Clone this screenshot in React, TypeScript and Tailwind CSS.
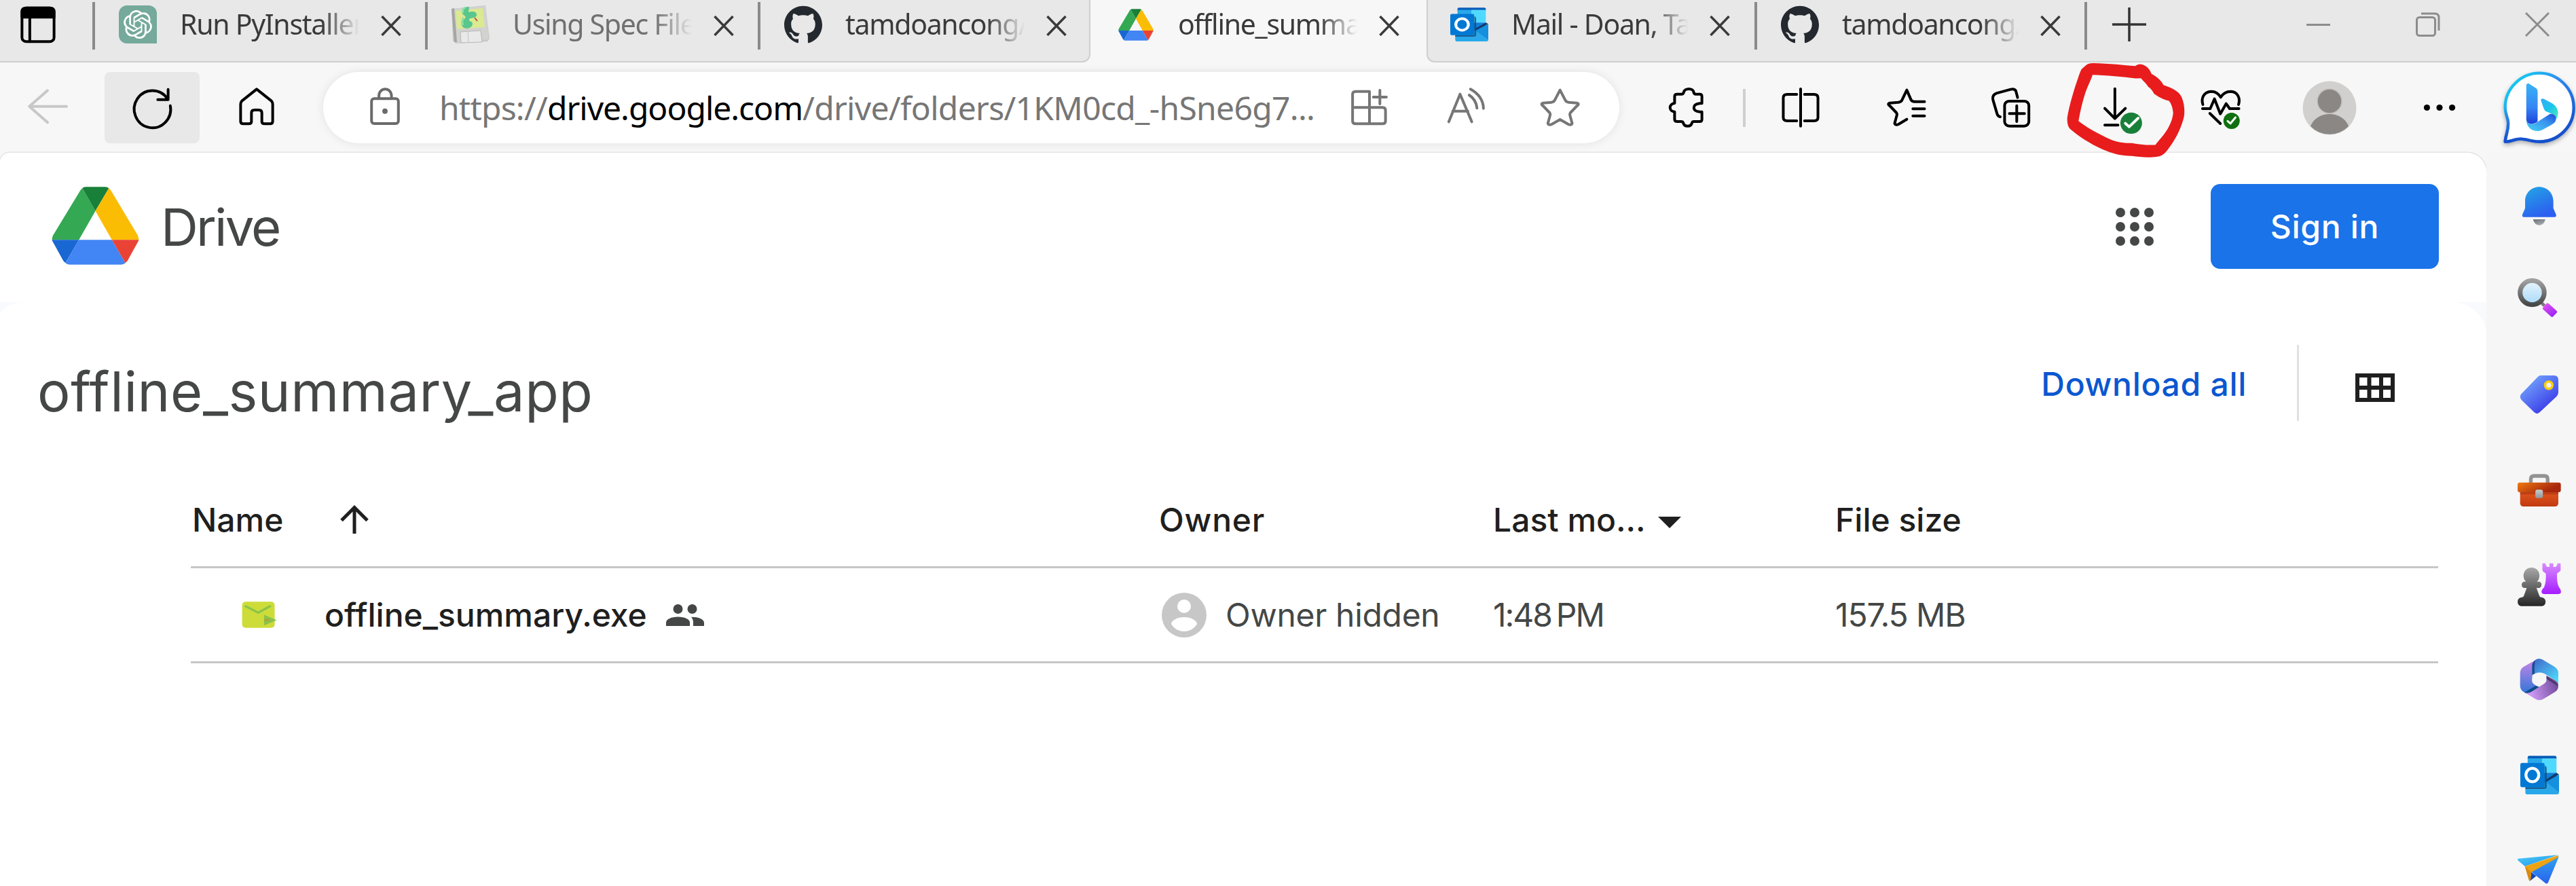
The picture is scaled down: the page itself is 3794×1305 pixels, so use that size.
import type { ReactNode } from "react";
import { SiGithub, SiOpenai } from "react-icons/si";

function Glyph({ vb, className = "", children }: { vb: string; className?: string; children: ReactNode }) {
  return (
    <svg
      viewBox={vb}
      preserveAspectRatio="none"
      fill="none"
      stroke="currentColor"
      strokeLinecap="round"
      strokeLinejoin="round"
      className={"h-[57px] w-[60px] shrink-0 overflow-visible [&_*]:[vector-effect:non-scaling-stroke] " + className}
      strokeWidth={4}
    >
      {children}
    </svg>
  );
}

function DriveLogo({ className }: { className: string }) {
  return (
    <svg viewBox="119 165 202 344" preserveAspectRatio="none" className={className}>
      <path fill="#34a853" d="M190 172Q187 176 185 182L122 380Q120 390 120 399H182L220 272Z" />
      <path fill="#188038" d="M190 172Q192 166 198 166H242Q248 166 251 172L220 272Z" />
      <path fill="#fbbc04" d="M251 172Q254 176 256 182L318 380Q320 390 320 399H258L220 272Z" />
      <path fill="#1967d2" d="M120 399H182L151 501Q147 496 145 488L123 412Q120 405 120 399Z" />
      <path fill="#4285f4" d="M182 399H258L289 501Q286 508 280 508H160Q154 508 151 501Z" />
      <path fill="#ea4335" d="M258 399H320Q320 405 317 412L295 488Q293 496 289 501Z" />
    </svg>
  );
}

function OutlookLogo({ className }: { className: string }) {
  return (
    <svg viewBox="333 638 169 169" preserveAspectRatio="none" className={className}>
      <path fill="#0a5cb8" d="M372 639H484Q491 639 491 646V652H365V646Q365 639 372 639Z" />
      <path fill="#28a8ea" d="M365 650H428V713H365Z" />
      <path fill="#50d9ff" d="M428 650H491V713H428Z" />
      <path fill="#0f7fd8" d="M365 713H491V760H365Z" />
      <path fill="#123b6d" d="M491 713L502 720L446 752V742Z" />
      <path fill="#28a8ea" d="M355 770L446 752L502 800Q501 807 494 807H362Q355 807 355 800Z" />
      <path fill="#1490df" d="M502 721V800L446 754Z" />
      <path fill="#14456f" opacity=".75" d="M355 776H440V682Q448 684 448 692V774Q448 783 439 783H355Z" />
      <rect x="333" y="670" width="106" height="106" rx="8" fill="#0078d4" />
      <ellipse cx="385.500" cy="722.500" rx="28" ry="29" fill="none" stroke="#fff" strokeWidth="12.500" />
    </svg>
  );
}

function CloseX({ className }: { className: string }) {
  return (
    <svg viewBox="0 0 30 30" className={"shrink-0 " + className} fill="none" stroke="currentColor" strokeWidth="3.500">
      <path d="M1.500 1L28.500 29M28.500 1L1.500 29" />
    </svg>
  );
}

function Floppy() {
  return (
    <svg viewBox="0 0 56 56" className="h-14 w-14">
      <path d="M0 5L50 0L56 49L53 53L6 56L2 52Z" fill="#c9c9c9" />
      <path d="M1 5L50 1L55 50L5 55Z" fill="#d2d2d0" />
      <path d="M0 5L4 4L8 54L4 54Z" fill="#a5a5a3" />
      <path d="M6 8L46 4L49 32L8 35Z" fill="#dbe991" />
      <path d="M13 39L43 37L45 54L14 55Z" fill="#e9e9e9" stroke="#b8b8b8" />
      <path d="M24 38L25 54" stroke="#c3c3c3" />
      <path d="M26 2C14 2 13 11 19 15C25 19 12 22 15 29C18 37 31 34 31 27C31 23 26 24 26 21C27 17 34 20 37 15C38 9 31 8 25 10" fill="#58c68d" />
      <path d="M20 3Q15 6 17 11M18 18Q14 23 17 29" stroke="#8fe0a6" strokeWidth="3" fill="none" />
      <path d="M34 18L38 23" stroke="#b3503a" strokeWidth="2" />
    </svg>
  );
}

function Tab({ icon, title, className, muted, bar = true, gap = "w-[267px]" }: { icon: ReactNode; title: string; className: string; muted?: boolean; bar?: boolean; gap?: string }) {
  return (
    <div className={"flex h-[72px] shrink-0 items-center " + className}>
      <div className={"mt-[3px] h-[70px] w-1 " + (bar ? "bg-[#8a8a8a]" : "")} />
      <div className="ml-[35px] flex h-14 w-14 shrink-0 items-center justify-center">{icon}</div>
      <div
        className={
          "mb-[3px] ml-[34px] shrink-0 overflow-hidden text-[41px] leading-[60px] tracking-[-1.3px] whitespace-nowrap [mask-image:linear-gradient(to_right,black_78%,transparent_99%)] " +
          gap + (muted ? " text-[#707070]" : " text-[#3a3a3a]")
        }
      >
        {title}
      </div>
      <CloseX className="mt-[3px] ml-[29px] h-[30px] w-[30px] text-[#3a3a3a]" />
    </div>
  );
}

function TabStrip() {
  return (
    <div className="flex h-[92px] bg-[#f7f7f7] font-['Noto_Sans',sans-serif]">
      <div className="flex w-[1606px] shrink-0 rounded-br-[12px] border-r-2 border-b-2 border-[#cfcfcf] bg-[#e8e8e8]">
        <div className="flex h-[72px] w-[136px] shrink-0 items-center pl-[26px]">
          <Glyph vb="41 24 94 168" className="h-[56px] text-black">
            <rect x="51" y="35" width="74" height="146" rx="10" ry="17" />
            <path d="M51 75V50Q51 35 61 35H115Q125 35 125 50V75Z" fill="currentColor" />
            <path d="M69 75V181" />
          </Glyph>
        </div>
        <Tab
          className="w-[490px]"
          title="Run PyInstaller"
          icon={
            <div className="flex h-14 w-14 items-center justify-center rounded-l-[12px] rounded-tr-[12px] bg-[#74a99b]">
              <SiOpenai className="h-[42px] w-[42px] text-white" />
            </div>
          }
        />
        <Tab className="w-[490px]" title="Using Spec Files" muted icon={<Floppy />} />
        <Tab className="w-[488px]" title="tamdoancong/" icon={<SiGithub className="h-14 w-14 text-[#24292f]" />} />
      </div>
      <Tab className="w-[495px]" title="offline_summary" bar={false} icon={<DriveLogo className="h-[47px] w-[52px]" />} />
      <div className="flex min-w-0 flex-1 rounded-bl-[12px] border-b-2 border-l-2 border-[#cfcfcf] bg-[#e8e8e8]">
        <Tab className="-ml-[6px] w-[487px]" title="Mail - Doan, Tam" bar={false} gap="w-[263px]" icon={<OutlookLogo className="h-[50px] w-14" />} />
        <Tab className="w-[486px]" title="tamdoancong/" gap="w-[263px]" icon={<SiGithub className="h-14 w-14 text-[#24292f]" />} />
        <div className="flex h-[72px] items-center">
          <div className="mt-[3px] h-[70px] w-1 bg-[#8a8a8a]" />
          <svg viewBox="0 0 50 50" className="ml-[37px] h-[50px] w-[50px] text-[#333]" stroke="currentColor" strokeWidth="3.500">
            <path d="M25 0V50M0 25H50" />
          </svg>
          <svg viewBox="0 0 35 35" className="ml-[236px] h-[35px] w-[35px]" stroke="#8c8c8c" strokeWidth="3">
            <path d="M0 17.500H35" />
          </svg>
          <svg viewBox="0 0 36 36" className="ml-[126px] h-[36px] w-[36px]" fill="none" stroke="#8c8c8c" strokeWidth="3">
            <rect x="1.500" y="7.500" width="27" height="27" rx="4" />
            <path d="M8 2H28Q34 2 34 8V27" />
          </svg>
          <svg viewBox="0 0 36 36" className="ml-[125px] h-[36px] w-[36px]" fill="none" stroke="#8c8c8c" strokeWidth="3">
            <path d="M1 1L35 35M35 1L1 35" />
          </svg>
        </div>
      </div>
    </div>
  );
}

function BingLogo() {
  return (
    <svg viewBox="260 76 317 320" preserveAspectRatio="none" className="ml-[64px] h-[107px] w-[106px] shrink-0 overflow-visible drop-shadow-[0_3px_3px_rgba(0,0,0,0.3)]">
      <defs>
        <linearGradient id="bo" x1="0" y1="0" x2=".9" y2=".9">
          <stop offset="0" stopColor="#12cdf0" />
          <stop offset=".2" stopColor="#18c0f0" />
          <stop offset=".5" stopColor="#3088f0" />
          <stop offset="1" stopColor="#1450cc" />
        </linearGradient>
        <linearGradient id="bo2" x1="0" y1="0" x2="0" y2="1">
          <stop offset="0.500" stopColor="#1a50d0" stopOpacity="0" />
          <stop offset="1" stopColor="#1550cc" />
        </linearGradient>
        <linearGradient id="b1" x1="0" y1="0" x2="0" y2="1">
          <stop offset="0" stopColor="#37b4f6" />
          <stop offset=".6" stopColor="#3584f5" />
          <stop offset="1" stopColor="#1c40d8" />
        </linearGradient>
        <linearGradient id="b2" x1="0" y1="1" x2="1" y2="0">
          <stop offset="0" stopColor="#46d2f4" />
          <stop offset=".6" stopColor="#3993ee" />
          <stop offset="1" stopColor="#1a49dc" />
        </linearGradient>
        <linearGradient id="b3" x1="0" y1="0" x2="1" y2="1">
          <stop offset="0" stopColor="#35a9fa" />
          <stop offset=".5" stopColor="#1ac7ea" />
          <stop offset="1" stopColor="#5be8b8" />
        </linearGradient>
      </defs>
      <path d="M418 84C496 84 570 148 570 236C570 322 500 386 418 386C385 386 362 374 335 374C308 374 290 388 268 386C270 352 287 330 280 292C274 270 268 256 268 234C268 150 340 84 418 84Z" fill="#fff" stroke="url(#bo)" strokeWidth="13" strokeLinejoin="round" />
      <path d="M418 84C496 84 570 148 570 236C570 322 500 386 418 386C385 386 362 374 335 374C308 374 290 388 268 386C270 352 287 330 280 292C274 270 268 256 268 234C268 150 340 84 418 84Z" fill="none" stroke="url(#bo2)" strokeWidth="13" strokeLinejoin="round" />
      <path d="M425 202Q427 194 437 197L470 214C494 228 504 246 500 270Q498 282 492 290C492 276 484 268 472 263L446 252Q441 248 438 240Z" fill="url(#b3)" />
      <path d="M361 290C362 305 382 314 402 304L466 264C484 262 496 276 491 292C488 302 480 307 470 313L432 334C404 348 362 334 361 290Z" fill="url(#b2)" />
      <path d="M361 138Q362 128 372 130L402 149Q411 154 411 166V296C400 312 361 314 361 286Z" fill="url(#b1)" />
    </svg>
  );
}

function Toolbar() {
  return (
    <div className="flex h-[133px] items-center bg-[#f7f7f7]">
      <Glyph vb="62 390 94 171" className="ml-10 text-[#c8c8c8]">
        <path d="M153 470H68M109 400L67 470L109 541" />
      </Glyph>
      <div className="ml-[54px] flex h-[105px] w-[140px] shrink-0 items-center justify-center rounded-lg bg-[#e8e8e8]">
        <Glyph vb="304 390 94 171">
          <path d="M393 467A42 82 0 1 1 387 438M388 395V440H364" />
        </Glyph>
      </div>
      <Glyph vb="546 390 94 171" className="ml-[54px]">
        <path d="M593 394L559 446Q556 452 556 460V536Q556 547 562 547H575Q581 547 581 538V499Q581 486 588 486H598Q605 486 605 499V538Q605 547 611 547H624Q630 547 630 536V460Q630 452 627 446Z" />
      </Glyph>
      <div className="ml-[68px] flex h-[105px] w-[1909px] shrink-0 items-center rounded-full bg-white shadow-[0_0_14px_rgba(0,0,0,0.09)]">
        <Glyph vb="842 390 94 171" className="ml-[61px] text-[#6b6b6b]">
          <rect x="858" y="436" width="62" height="110" rx="6" ry="12" />
          <path d="M875 434V424C875 384 904 384 904 424V434" />
          <ellipse cx="889" cy="491" rx="3" ry="6" fill="currentColor" />
        </Glyph>
        <div className="ml-[50px] font-['Noto_Sans',sans-serif] text-[48px] leading-[60px] whitespace-nowrap text-[#767676]">
          <span className="tracking-[-0.8px]">https://</span>
          <span className="tracking-[-1.03px] text-black">drive.google.com</span>
          <span className="tracking-[-0.7px]">/drive/folders/1KM0cd_-hSne6g7...</span>
        </div>
        <Glyph vb="-20 390 94 171" className="mr-[83px] ml-auto text-[#767676]">
          <path d="M27 404H-5Q-12 404 -12 416V535Q-12 547 -5 547H57Q64 547 64 535V487Q64 475 57 475H-12M27 404V547M51 399V459M36 429H66" />
        </Glyph>
        <Glyph vb="203 390 94 171" className="mr-[77px] text-[#767676]">
          <path d="M209 538L235 416L262 538M218 491H253M256 420Q272 440 274 478M259 394Q288 425 289 479" />
        </Glyph>
        <Glyph vb="418 390 94 171" className="mr-[58px] text-[#767676]">
          <path d="M466 398L454 442Q452 450 446 452L427 455Q420 460 427 468L442 498Q444 503 443 510L438 545Q440 555 447 549L466 528L485 549Q492 555 494 545L489 510Q488 503 490 498L505 468Q512 460 505 455L486 452Q480 450 478 442Z" />
        </Glyph>
      </div>
      <Glyph vb="711 390 94 171" className="ml-[68px]">
        <path d="M738 416H748Q752 416 753 408C755 388 775 388 776 408Q777 416 781 416H790Q795 416 795 426V457H790C772 462 772 490 790 494H795V528Q795 537 790 537H776Q773 537 772 543C770 562 754 562 752 543Q751 537 747 537H738Q732 537 732 528V494C718 492 718 460 732 456V426Q732 416 738 416Z" />
      </Glyph>
      <div className="ml-[54px] h-14 w-1 shrink-0 bg-[#cfcfcf]" />
      <Glyph vb="976 390 94 171" className="ml-[51px]">
        <path d="M1014 417H992Q983 417 983 432V520Q983 534 992 534H1014M1032 417H1054Q1063 417 1063 432V520Q1063 534 1054 534H1032M1023 393V557" />
      </Glyph>
      <Glyph vb="1221 390 94 171" className="ml-[97px]">
        <path d="M1308 449H1285Q1279 449 1277 442L1267 398L1256 442Q1254 450 1248 452L1228 455Q1221 460 1228 468L1243 498Q1245 503 1244 510L1239 545Q1241 555 1248 549L1267 527M1281 481H1308M1281 512H1308" />
      </Glyph>
      <Glyph vb="1462 390 94 171" className="ml-[93px]">
        <path d="M1484 516Q1479 515 1477 505L1467 440Q1465 420 1475 412L1508 395Q1517 391 1520 402L1524 431M1522 467V537M1505 502H1540" />
        <rect x="1494" y="447" width="56" height="110" rx="11" ry="19" />
      </Glyph>
      <Glyph vb="343 390 105 171" className="ml-[104px]">
        <path d="M376 392V522M350 479L376 524L403 479M350 553H384" />
        <ellipse cx="418" cy="544" rx="28" ry="47" fill="#19803a" stroke="none" />
        <path d="M403 545L413 560L436 522" stroke="#fff" />
      </Glyph>
      <Glyph vb="597 390 105 171" className="ml-[85px]">
        <path d="M603 462C598 435 605 405 625 404C638 404 645 418 649 430C653 418 662 404 675 404C693 405 700 435 695 462M602 480H622L633 437L648 503L663 458L672 480H696M621 501L648 546" />
        <ellipse cx="677" cy="534" rx="21" ry="36" fill="#107010" stroke="none" />
        <path d="M667 535L674 546L687 519" stroke="#fff" strokeWidth="3" />
      </Glyph>
      <svg viewBox="0 0 80 80" className="ml-[90px] h-20 w-20 shrink-0">
        <circle cx="40" cy="40" r="39.500" fill="#d2d0ce" />
        <circle cx="40" cy="30" r="18" fill="#8a8784" stroke="#c2c0bd" strokeWidth="1.500" />
        <path d="M12 67C16 56 27 49 40 49C53 49 64 56 68 67A39 39 0 0 1 12 67Z" fill="#8a8784" />
      </svg>
      <Glyph vb="1161 390 105 171" className="ml-[92px]">
        <g fill="#000" stroke="none">
          <ellipse cx="1181" cy="475.500" rx="8" ry="13.500" />
          <ellipse cx="1213.500" cy="475.500" rx="8" ry="13.500" />
          <ellipse cx="1246" cy="475.500" rx="8" ry="13.500" />
        </g>
      </Glyph>
      <BingLogo />
    </div>
  );
}

function SideIcon({ vb, className, children }: { vb: string; className: string; children: ReactNode }) {
  return (
    <svg viewBox={vb} preserveAspectRatio="none" className={"w-16 shrink-0 overflow-visible " + className}>
      {children}
    </svg>
  );
}

function Grad({ id, a, b, x2 = 0, y2 = 1 }: { id: string; a: string; b: string; x2?: number; y2?: number }) {
  return (
    <linearGradient id={id} x1="0" y1="0" x2={x2} y2={y2}>
      <stop offset="0" stopColor={a} />
      <stop offset="1" stopColor={b} />
    </linearGradient>
  );
}

function Sidebar() {
  return (
    <div className="flex w-[132px] shrink-0 flex-col bg-[#f6f6f6] pt-[50px] pl-[46px]">
      <SideIcon vb="322 585 191 171" className="h-[57px]">
        <defs>
          <Grad id="bell" a="#22a8e4" b="#2c5ff0" x2={0.5} />
          <Grad id="clap" a="#6a7076" b="#a5abb0" x2={0.6} />
        </defs>
        <path d="M417 586C452 586 479 614 479 648V680L491 708Q493 718 486 719H348Q341 718 343 708L355 680V648C355 614 382 586 417 586Z" fill="url(#bell)" />
        <path d="M390 729H444C440 746 430 755 417 755C404 755 394 746 390 729Z" fill="url(#clap)" />
      </SideIcon>
      <SideIcon vb="322 990 191 171" className="mt-[78px] h-[57px]">
        <defs>
          <Grad id="lens" a="#e9f5fb" b="#a8d9fa" />
          <Grad id="ring" a="#a0a0a0" b="#484848" />
          <Grad id="hand" a="#ee52f5" b="#9a27f2" x2={0.6} />
        </defs>
        <path d="M425 1096L440 1111" stroke="#777" strokeWidth="14" />
        <circle cx="386" cy="1053" r="53" fill="url(#lens)" stroke="url(#ring)" strokeWidth="21" />
        <path d="M432 1121L450 1100Q454 1098 459 1102L494 1134Q497 1138 494 1142L478 1159Q473 1163 469 1159L434 1127Q431 1124 432 1121Z" fill="url(#hand)" />
      </SideIcon>
      <SideIcon vb="322 158 191 171" className="mt-[86px] h-[57px]">
        <defs>
          <Grad id="tag" a="#7db8ff" b="#342fe6" x2={0.8} />
        </defs>
        <path d="M423 158H482Q501 159 501 178V232Q501 243 493 251L419 321Q407 332 395 321L338 265Q328 252 338 240L411 164Q416 158 423 158Z" fill="url(#tag)" />
        <circle cx="459" cy="201" r="16" fill="#f4f1fb" stroke="#f8cf0a" strokeWidth="11" />
      </SideIcon>
      <SideIcon vb="322 593 191 147" className="mt-[88px] h-[49px]">
        <defs>
          <Grad id="lid" a="#f07a12" b="#a8280c" x2={0.9} y2={0.4} />
          <Grad id="case" a="#e65a22" b="#c23a10" />
          <Grad id="lock" a="#c8ccd0" b="#8f959b" />
        </defs>
        <path d="M380 636V615Q381 602 394 602H440Q454 602 454 615V636" fill="none" stroke="#939393" strokeWidth="16" />
        <path d="M333 660H501V722Q500 737 486 737H348Q334 737 333 722Z" fill="url(#case)" />
        <path d="M333 672H501V684H333Z" fill="#9d2b0c" opacity=".5" />
        <rect x="322" y="631" width="190" height="43" rx="9" fill="url(#lid)" />
        <rect x="400" y="663" width="33" height="37" rx="9" fill="url(#lock)" />
      </SideIcon>
      <SideIcon vb="322 987 191 192" className="mt-[82px] h-[64px]">
        <defs>
          <Grad id="pawn" a="#a8a8a8" b="#252525" />
          <Grad id="rook" a="#d88cff" b="#a51cff" />
        </defs>
        <path d="M431 989H444Q447 1003 454 1005H462V989H479V1005H487Q495 1003 497 989H511V1019Q511 1023 506 1026L495 1034Q494 1075 503 1093Q513 1105 513 1116Q511 1125 500 1125H440Q427 1125 427 1114Q428 1104 438 1096C447 1075 447 1050 446 1034L434 1025Q431 1022 431 1018Z" fill="url(#rook)" />
        <path d="M383 1008C405 1008 418 1025 418 1043Q418 1060 407 1070H416Q427 1072 427 1083Q427 1097 416 1098H405L418 1134Q421 1140 430 1140Q444 1142 445 1159Q444 1177 430 1178H337Q323 1177 322 1159Q323 1142 337 1140Q346 1140 349 1134L362 1098H351Q340 1096 340 1083Q341 1072 350 1070H359Q348 1060 348 1043C348 1025 362 1008 383 1008Z" fill="url(#pawn)" />
      </SideIcon>
      <SideIcon vb="322 210 191 186" className="mt-[77px] h-[62px]">
        <defs>
          <Grad id="m1" a="#c285e6" b="#3276d8" />
          <Grad id="m2" a="#3e63c8" b="#4fe0ff" x2={0.9} />
          <Grad id="m3" a="#cf9af4" b="#6b4798" x2={0.9} y2={-0.2} />
        </defs>
        <path d="M392 221L349 246Q333 256 333 274V330Q333 348 349 358C362 366 375 361 386 354L412 336L392 322Q385 316 385 306Z" fill="url(#m1)" />
        <path d="M352 360L402 330L419 336L378 362Q365 368 352 360Z" fill="#0d4d86" />
        <path d="M354 360Q368 366 384 356L440 320Q449 314 449 303V286L490 314Q505 328 499 342Q496 352 486 358L437 388Q418 400 398 388Z" fill="url(#m3)" />
        <path d="M449 286L492 308Q503 318 500 332L449 300Z" fill="#3f2a60" opacity=".7" />
        <path d="M386 283V240C388 225 400 214 412 211Q420 209 430 214L484 246Q501 257 501 274V322Q498 312 486 305L440 277Q415 264 386 283Z" fill="url(#m2)" />
        <path d="M386 283V240Q388 226 399 217Q394 245 397 277Z" fill="#123f80" opacity=".8" />
      </SideIcon>
      <OutlookLogo className="mt-[81px] ml-[3.500px] h-[57px] w-[57px] shrink-0" />
      <SideIcon vb="322 1078 191 129" className="mt-[89px] h-[43px]">
        <defs>
          <Grad id="p1" a="#4ccdf8" b="#1e8fe8" x2={1} />
          <Grad id="p2" a="#2da4f2" b="#2b62ec" />
        </defs>
        <path d="M499 1079L325 1095Q318 1099 325 1104L354 1129Z" fill="url(#p1)" />
        <path d="M382 1155L404 1172L376 1194Z" fill="#1247b8" />
        <path d="M500 1082Q503 1084 501 1092L456 1201Q450 1210 442 1202L382 1153Z" fill="url(#p2)" />
        <path d="M499 1081L354 1129L372 1190Q376 1197 379 1189L382 1155L498 1091Q504 1084 499 1081Z" fill="#eda313" />
        <path d="M354 1129L372 1190Q376 1197 379 1189L382 1155Z" fill="#d98a10" />
      </SideIcon>
    </div>
  );
}

function DriveHeader() {
  return (
    <div className="flex h-[220px] items-start">
      <DriveLogo className="mt-[50px] ml-[76px] h-[115px] w-[129px]" />
      <div className="mt-[63px] ml-[32px] text-[76px] leading-[92px] tracking-[-2.8px] text-[#444746]">Drive</div>
      <div className="mt-[81px] ml-auto grid grid-cols-3 gap-[7px]">
        {[0, 1, 2, 3, 4, 5, 6, 7, 8].map((i) => (
          <div key={i} className="h-[14px] w-[14px] rounded-full bg-[#444746]" />
        ))}
      </div>
      <button className="mt-[46px] mr-[70px] ml-[84px] h-[125px] w-[336px] rounded-[14px] bg-[#1a73e8] text-[48px] font-medium tracking-[0.7px] text-white">
        Sign in
      </button>
    </div>
  );
}

function TitleRow() {
  return (
    <div className="flex h-[264px] items-start">
      <h1 className="mt-[82px] ml-[55px] text-[81px] leading-[100px] tracking-[0.6px] text-[#444746]">offline_summary_app</h1>
      <div className="mt-[91px] ml-auto text-[48px] leading-[60px] font-medium tracking-[0.7px] text-[#0b57d0]">Download all</div>
      <div className="mt-[63px] ml-[74px] h-28 w-[3px] bg-[#e0e0e0]" />
      <svg viewBox="0 0 58 42" className="mt-[105px] mr-[135px] ml-[83px] h-[42px] w-[58px]">
        <path fill="#1f1f1f" fillRule="evenodd" d="M0 0H58V42H0ZM6 6V18H17.500V6ZM23.500 6V18H35V6ZM41 6V18H52V6ZM6 24V36H17.500V24ZM23.500 24V36H35V24ZM41 24V36H52V24Z" />
      </svg>
    </div>
  );
}

const columns = "grid grid-cols-[1426px_492px_504px_1fr] items-center border-b-[3px] border-[#c7c7c7] text-[48px] leading-[60px] whitespace-nowrap";

function FileTable() {
  return (
    <div className="mr-[71px] ml-[281px]">
      <div className={columns + " h-[128px] pb-[11px] font-medium text-[#1f1f1f]"}>
        <div className="flex items-center pl-[2px]">
          <span className="w-[218px]">Name</span>
          <svg viewBox="0 0 42 42" className="mb-[2px] h-[42px] w-[42px]" fill="none" stroke="#1f1f1f" strokeWidth="5">
            <path d="M21 42V4M2 22.500L21 3.500L40 22.500" />
          </svg>
        </div>
        <div className="tracking-[0.8px]">Owner</div>
        <div className="flex items-center">
          <span>Last mo...</span>
          <svg viewBox="0 0 34 17" className="mt-[6px] ml-[18px] h-[17px] w-[34px]">
            <path d="M0 0H34L17 17Z" fill="#1f1f1f" />
          </svg>
        </div>
        <div>File size</div>
      </div>
      <div className={columns + " h-[140px] text-[#444746]"}>
        <div className="flex items-center pl-[75px]">
          <svg viewBox="203 562 90 118" preserveAspectRatio="none" className="h-[39px] w-[52px]">
            <rect x="204" y="563" width="83" height="116" rx="9" ry="14" fill="#cddc39" />
            <path d="M211 581L245 612L277 581" fill="none" stroke="#8bc34a" strokeWidth="8" />
            <path d="M260 621L292 645L260 669Z" fill="#8bc34a" />
            <path d="M260 640H274V650H260Z" fill="#a8a83a" />
          </svg>
          <span className="ml-[70px] font-medium text-[#1f1f1f]">offline_summary.exe</span>
          <svg viewBox="0 0 56 32" className="ml-[28px] h-8 w-14 fill-[#444746]">
            <circle cx="17.500" cy="7" r="7" />
            <circle cx="38.500" cy="7" r="7" />
            <path d="M0 32V27C0 22 8 18.500 17.500 18.500S35 22 35 27V32Z" />
            <path d="M37 18.700C47 18.500 56 22 56 27V32H40V27Q40 22 37 18.700Z" />
          </svg>
        </div>
        <div className="flex items-center pl-1">
          <svg viewBox="0 0 66 66" className="h-[66px] w-[66px]">
            <circle cx="33" cy="33" r="33" fill="#c7c7c7" />
            <circle cx="33" cy="20" r="10" fill="#fff" />
            <path d="M33 36C43 36 52 41 52 46C48 53 41 57 33 57S18 53 14 46C14 41 23 36 33 36Z" fill="#fff" />
          </svg>
          <span className="ml-7 tracking-[-0.3px]">Owner hidden</span>
        </div>
        <div className="tracking-[-2px]">{"1:48\u202FPM"}</div>
        <div className="tracking-[-1.1px]">157.5 MB</div>
      </div>
    </div>
  );
}

function Scribble() {
  return (
    <svg viewBox="250 276 308 424" preserveAspectRatio="none" className="pointer-events-none absolute top-[92px] left-[3043px] h-[141px] w-[176px]">
      <path
        fill="#e81c1c"
        fillRule="evenodd"
        d="M300 290Q305 280 320 279C360 280 400 288 428 292Q440 275 455 292C462 300 467 312 470 326C485 340 495 355 501 376C520 388 540 400 548 430C555 460 556 490 554 515C548 560 535 610 515 655C505 680 498 690 485 693C460 700 440 694 420 690C390 690 370 680 345 662C310 635 280 600 260 570Q252 555 253 520C258 470 265 430 273 385C280 350 285 320 290 305ZM318 331L317 338C312 360 305 385 300 408C292 450 286 495 282 535C305 565 330 590 365 617C380 628 400 634 420 633C440 640 460 643 480 641Q485 630 495 610C510 580 524 540 526 500C525 480 522 460 515 446C500 440 490 430 477 415C472 400 468 390 462 384C458 372 450 360 443 346L430 347C400 340 350 332 318 331Z"
      />
    </svg>
  );
}

export default function App() {
  return (
    <div className="relative h-[1305px] w-[3794px] overflow-hidden bg-[#f7f7f7] text-black">
      <TabStrip />
      <Toolbar />
      <div className="flex h-[1080px]">
        <div className="w-[3662px] shrink-0 overflow-hidden rounded-tl-[14px] rounded-tr-[28px] bg-white font-['Inter',sans-serif] shadow-[0_0_0_1.500px_#e4e4e4]">
          <DriveHeader />
          <div className="bg-[#f8fafd]">
            <div className="h-[860px] rounded-tl-[38px_20px] rounded-tr-[50px] bg-white">
              <TitleRow />
              <FileTable />
            </div>
          </div>
        </div>
        <Sidebar />
      </div>
      <Scribble />
    </div>
  );
}
